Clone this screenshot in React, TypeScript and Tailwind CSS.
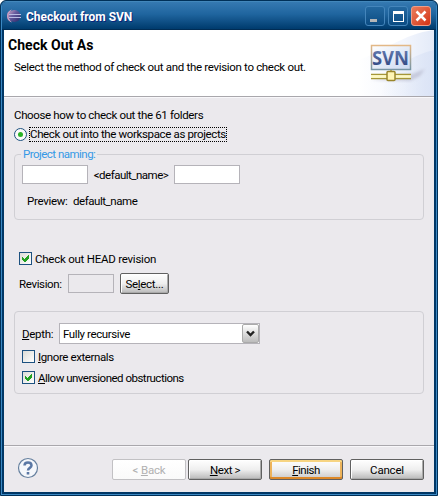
import React from "react";

function Check({ on = false }: { on?: boolean }) {
  return (
    <span className="flex h-[13px] w-[13px] shrink-0 items-center justify-center border border-[#1c5180] bg-linear-to-br from-[#dcdcd7] to-white">
      {on && (
        <svg width="9" height="9" viewBox="0 0 9 9" shapeRendering="crispEdges">
          <path d="M1 3v3l2 2h1l4-4V1L3.500 5.200z" fill="#21a121" />
        </svg>
      )}
    </span>
  );
}

function Field({ className = "" }: { className?: string }) {
  return <div className={`h-[19px] shrink-0 border border-[#b5b3b9] ${className}`} />;
}

const buttonBase =
  "flex h-[21px] shrink-0 items-center justify-center rounded-[2px] border bg-linear-to-b whitespace-nowrap";
const raised = "border-[#606060] from-white via-[#efefef] to-[#b9b9b9] shadow-[inset_1px_1px_0_#fff,inset_-1px_-1px_0_#aaa]";

function SvnBanner() {
  return (
    <svg width="76" height="66" viewBox="0 0 76 66" className="shrink-0">
      <defs>
        <linearGradient id="wash" x1="0" y1="0" x2="1" y2="0">
          <stop offset="0" stopColor="#fff" />
          <stop offset="0.6" stopColor="#f3f6fd" />
          <stop offset="1" stopColor="#e3eaf8" />
        </linearGradient>
        <linearGradient id="swoosh" x1="0" y1="0" x2="1" y2="0">
          <stop offset="0" stopColor="#dfe7f7" stopOpacity="0" />
          <stop offset="1" stopColor="#d8e1f5" stopOpacity=".8" />
        </linearGradient>
        <linearGradient id="frame" x1="0" y1="0" x2="0" y2="1">
          <stop offset="0" stopColor="#e3b886" />
          <stop offset="1" stopColor="#7795a5" />
        </linearGradient>
        <linearGradient id="letters" x1="0" y1="0" x2="0" y2="1">
          <stop offset="0" stopColor="#7087ba" />
          <stop offset="1" stopColor="#253d79" />
        </linearGradient>
        <linearGradient id="panel" x1="0" y1="0" x2="1" y2="1">
          <stop offset="0" stopColor="#fff" />
          <stop offset="1" stopColor="#cbd9f1" />
        </linearGradient>
        <filter id="soft"><feGaussianBlur stdDeviation="1.5" /></filter>
      </defs>
      <path d="M0 66V30C25 22 45 4 76 0v66z" fill="url(#wash)" />
      <path d="M22 66C29 42 50 26 76 20v46z" fill="url(#swoosh)" />
      <path d="M13 50L54 44l13-5-5 7-10 5z" fill="#a9a9bf" opacity=".5" filter="url(#soft)" />
      <rect x="13.500" y="15.500" width="39" height="24" fill="url(#panel)" stroke="url(#frame)" strokeWidth="1.5" />
      <text x="14" y="35" textLength="37" lengthAdjust="spacingAndGlyphs" fontFamily="Open Sans, sans-serif" fontWeight="700" fontSize="19" fill="url(#letters)">SVN</text>
      <path d="M33 40v5M13 44.500h40M13 48.500h40" stroke="#a59638" strokeWidth="1.4" />
      <path d="M13 46.500h40" stroke="#fffac0" strokeWidth="2.5" />
      <rect x="29" y="41.500" width="8" height="9" rx="1" fill="#fff5b5" stroke="#9a862b" strokeWidth="1.5" />
    </svg>
  );
}

export default function App() {
  return (
    <div className="flex h-[496px] w-[438px] flex-col overflow-hidden rounded-t-[6px] border border-[#003058] bg-[#003766] font-[Roboto,sans-serif] text-[11.5px] leading-[14px] text-black">
      <div className="flex flex-1 flex-col rounded-t-[5px] border border-[#3b88c3] border-t-[#4287bb] bg-[#003766]">
        <header className="flex h-7 shrink-0 items-center rounded-t-[4px] border-b border-[#002c54] bg-linear-to-b from-[#3579b1] from-0% via-[#1f659f] via-45% to-[#003b6d] pr-[5px] pl-[5px]">
          <svg width="14" height="14" viewBox="0 0 14 14">
            <defs>
              <linearGradient id="ball" x1="0" y1="0" x2="1" y2="1">
                <stop offset="0" stopColor="#d2a4c5" />
                <stop offset=".4" stopColor="#655b9e" />
                <stop offset="1" stopColor="#272666" />
              </linearGradient>
            </defs>
            <path d="M5 .5C1 2 0 4 0 7s1 5 5 6.500C3 11 2 9 2 7s1-4 3-6.500z" fill="#c59bc1" />
            <circle cx="7.500" cy="7" r="6" fill="url(#ball)" />
            <path d="M2 5.500h12M2 8.500h12" stroke="#b9bbe4" />
          </svg>
          <h1 className="mt-[3px] ml-[5px] text-[12px] font-bold tracking-[-0.02px] whitespace-nowrap text-white [text-shadow:1px_1px_0_#08247a]">Checkout from SVN</h1>
          <div className="mt-px ml-auto flex gap-[3px]">
            <div className="flex h-5 w-5 items-end rounded-[3px] border border-[#4485bb] bg-linear-to-b from-[#2368a0] to-[#0b4c83] pb-[3px] pl-1"><span className="h-[3px] w-[7px] bg-[#b4b6b8]" /></div>
            <div className="flex h-5 w-5 items-center justify-center rounded-[3px] border border-[#4485bb] bg-linear-to-b from-[#2368a0] to-[#0b4c83]"><span className="h-[11px] w-[11px] border border-t-[3px] border-white" /></div>
            <div className="flex h-5 w-5 items-center justify-center rounded-[3px] border border-[#ed9d88] bg-linear-to-br from-[#e97b5b] to-[#d42f0d]">
              <svg width="12" height="12"><path d="M1.500 1.500l9 9M10.500 1.500l-9 9" stroke="white" strokeWidth="2.5" /></svg>
            </div>
          </div>
        </header>

        <main className="mx-[2px] mb-[2px] flex flex-1 flex-col bg-[#ebe9ed]">
          <section className="flex h-[66px] shrink-0 justify-between bg-white">
            <div className="pt-[7px] pl-[4px] whitespace-nowrap">
              <h2 className="text-[14px] leading-[16px] font-bold tracking-[0.03px]">Check Out As</h2>
              <p className="mt-[7px] ml-[6px] tracking-[-0.32px]">Select the method of check out and the revision to check out.</p>
            </div>
            <SvnBanner />
          </section>
          <div className="h-[2px] shrink-0 border-t border-[#a9a7ac] bg-[#f8f7fa]" />

          <section className="flex h-[347px] shrink-0 flex-col px-[10px] pt-[10px] whitespace-nowrap">
            <p className="tracking-[-0.35px]">Choose how to check out the 61 folders</p>
            <div className="mt-[4px] flex h-[16px] items-center">
              <span className="flex h-[13px] w-[13px] items-center justify-center rounded-full border border-[#1c5180] bg-[#fafafa]"><span className="h-[5px] w-[5px] rounded-full bg-[#29b326]" /></span>
              <span className="ml-[2px] flex h-[15px] w-[198px] items-center border border-dotted border-black tracking-[-0.36px]">Check out into the workspace as projects</span>
            </div>
            <fieldset className="mt-[5px] h-[73px] rounded-[4px] border border-[#d0cfd4]">
              <legend className="ml-[6px] px-[2px] tracking-[-0.52px] text-[#3599e6]">Project naming:</legend>
              <div className="mt-[4px] ml-[7px] flex items-center">
                <Field className="w-[66px] bg-white" />
                <span className="w-[86px] text-center tracking-[-0.5px]">&lt;default_name&gt;</span>
                <Field className="w-[66px] bg-white" />
              </div>
              <p className="mt-[10px] ml-[12px] flex"><span className="w-[46px] tracking-[-0.3px]">Preview:</span><span className="tracking-[-0.45px]">default_name</span></p>
            </fieldset>
            <div className="mt-[32px] ml-[5px] flex h-[13px] items-center gap-[3px]"><Check on /><span className="tracking-[-0.24px]">Check out HEAD revision</span></div>
            <div className="mt-[8px] ml-[5px] flex items-center">
              <span className="w-[49px] tracking-[-0.35px]">Revision:</span>
              <Field className="w-[46px]" />
              <button className={`${buttonBase} ${raised} ml-[6px] w-[49px] tracking-[-0.3px]`}>Se<u>l</u>ect...</button>
            </div>
            <div className="mt-[17px] h-[83px] shrink-0 rounded-[4px] border border-[#d0cfd4] px-[7px] pt-[11px]">
              <div className="flex items-center">
                <span className="w-[37px] tracking-[-0.3px]"><u>D</u>epth:</span>
                <div className="flex h-[21px] w-[201px] items-center justify-between border border-[#b5b3b9] bg-white pl-[3px]">
                  <span className="tracking-[-0.4px]">Fully recursive</span>
                  <span className="flex h-[19px] w-[17px] items-center justify-center rounded-[2px] border border-[#aaa] bg-linear-to-b from-white to-[#bcbcbc]"><svg width="9" height="7"><path d="M1 1.500l3.500 3.500L8 1.500" fill="none" stroke="#222" strokeWidth="2.4" /></svg></span>
                </div>
              </div>
              <div className="mt-[6px] flex h-[13px] items-center gap-[3px]"><Check /><span className="tracking-[-0.4px]"><u>I</u>gnore externals</span></div>
              <div className="mt-[8px] flex h-[13px] items-center gap-[3px]"><Check on /><span className="tracking-[-0.5px]"><u>A</u>llow unversioned obstructions</span></div>
            </div>
          </section>

          <footer className="flex flex-1 items-start border-t border-[#a9a7ac] px-[10px] pt-[13px] shadow-[inset_0_1px_0_#f8f7fa]">
            <svg width="22" height="22" className="-mt-[2px] ml-[3px]">
              <circle cx="11" cy="11" r="9.500" fill="#f5f7fb" stroke="#66809f" strokeWidth="1.2" />
              <path d="M7.500 8.500c0-4 7-4 7 0 0 2.500-3.500 2.200-3.500 5" fill="none" stroke="#5b78a5" strokeWidth="2.500" />
              <path d="M9.700 15h2.600v2.500H9.700z" fill="#5b78a5" />
            </svg>
            <div className="ml-auto flex">
              <button className={`${buttonBase} w-[74px] border-[#c2c1c4] from-white to-[#fafafa] tracking-[-0.2px] text-[#b1b1b1]`}><span>&lt; <u>B</u>ack</span></button>
              <button className={`${buttonBase} ${raised} ml-[2px] w-[74px] tracking-[-0.4px]`}><span><u>N</u>ext &gt;</span></button>
              <button className={`${buttonBase} ml-[7px] w-[74px] border-[#606060] from-white via-[#efefef] to-[#c8c8c8] tracking-[-0.5px] shadow-[inset_0_2px_0_#f7d582,inset_0_-2px_0_#dd8929,inset_2px_0_0_#edb35b,inset_-2px_0_0_#edb35b]`}><span><u>F</u>inish</span></button>
              <button className={`${buttonBase} ${raised} ml-[7px] w-[74px] tracking-[-0.2px]`}>Cancel</button>
            </div>
          </footer>
        </main>
      </div>
    </div>
  );
}
